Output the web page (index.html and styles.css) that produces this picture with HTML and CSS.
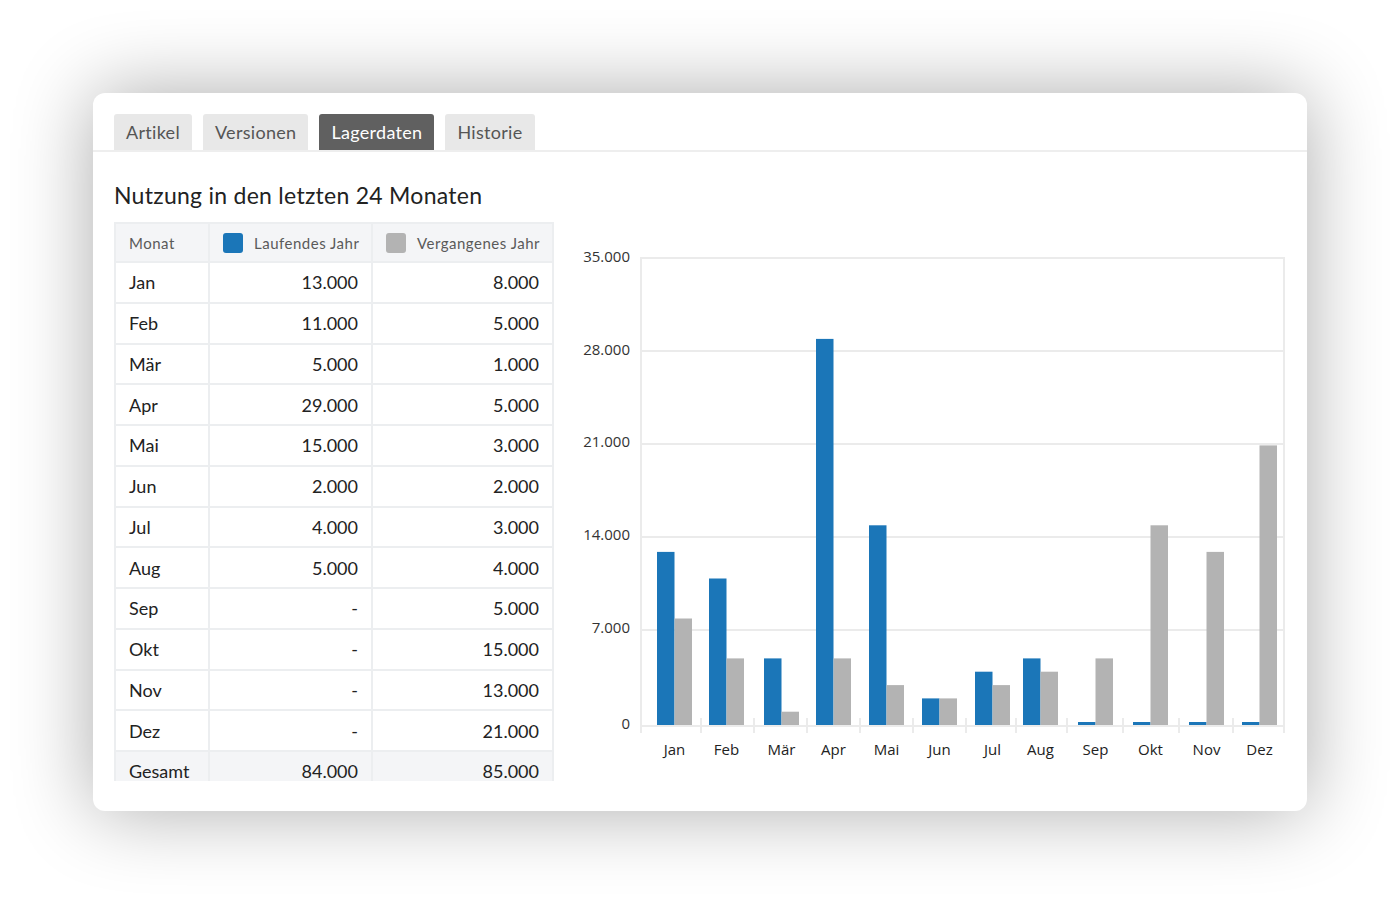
FILE: index.html
```html
<!DOCTYPE html>
<html lang="de">
<head>
<meta charset="utf-8">
<title>Lagerdaten</title>
<link rel="stylesheet" href="styles.css">
</head>
<body>
<div class="card">
  <nav class="tabs">
    <span class="tab">Artikel</span>
    <span class="tab">Versionen</span>
    <span class="tab active">Lagerdaten</span>
    <span class="tab">Historie</span>
  </nav>
  <div class="content">
    <h2 class="title">Nutzung in den letzten 24 Monaten</h2>
    <div class="panel">
      <div class="table-wrap">
        <table class="data">
          <colgroup>
            <col class="c-month">
            <col class="c-num">
            <col class="c-num2">
          </colgroup>
          <thead>
            <tr>
              <th>Monat</th>
              <th class="right"><span class="legend blue"></span>Laufendes Jahr</th>
              <th class="right"><span class="legend gray"></span>Vergangenes Jahr</th>
            </tr>
          </thead>
          <tbody>
            <tr><td>Jan</td><td class="num">13.000</td><td class="num">8.000</td></tr>
            <tr><td>Feb</td><td class="num">11.000</td><td class="num">5.000</td></tr>
            <tr><td>Mär</td><td class="num">5.000</td><td class="num">1.000</td></tr>
            <tr><td>Apr</td><td class="num">29.000</td><td class="num">5.000</td></tr>
            <tr><td>Mai</td><td class="num">15.000</td><td class="num">3.000</td></tr>
            <tr><td>Jun</td><td class="num">2.000</td><td class="num">2.000</td></tr>
            <tr><td>Jul</td><td class="num">4.000</td><td class="num">3.000</td></tr>
            <tr><td>Aug</td><td class="num">5.000</td><td class="num">4.000</td></tr>
            <tr><td>Sep</td><td class="num">-</td><td class="num">5.000</td></tr>
            <tr><td>Okt</td><td class="num">-</td><td class="num">15.000</td></tr>
            <tr><td>Nov</td><td class="num">-</td><td class="num">13.000</td></tr>
            <tr><td>Dez</td><td class="num">-</td><td class="num">21.000</td></tr>
            <tr class="total"><td>Gesamt</td><td class="num">84.000</td><td class="num">85.000</td></tr>
          </tbody>
        </table>
      </div>
      <div class="chart">
        <svg width="740" height="557" viewBox="0 0 740 557" xmlns="http://www.w3.org/2000/svg">
          <g class="grid">
            <line x1="81" y1="36" x2="725" y2="36"/>
            <line x1="81" y1="129" x2="725" y2="129"/>
            <line x1="81" y1="222" x2="725" y2="222"/>
            <line x1="81" y1="315" x2="725" y2="315"/>
            <line x1="81" y1="408" x2="725" y2="408"/>
            <line x1="81" y1="35" x2="81" y2="511"/>
            <line x1="724" y1="35" x2="724" y2="511"/>
          </g>
          <g class="blue-bars">
            <rect x="97" y="329.9" width="17.5" height="173.1"/>
            <rect x="149" y="356.5" width="17.5" height="146.5"/>
            <rect x="204" y="436.4" width="17.5" height="66.6"/>
            <rect x="256" y="116.9" width="17.5" height="386.1"/>
            <rect x="309" y="303.3" width="17.5" height="199.7"/>
            <rect x="362" y="476.4" width="17.5" height="26.6"/>
            <rect x="415" y="449.7" width="17.5" height="53.3"/>
            <rect x="463" y="436.4" width="17.5" height="66.6"/>
            <rect x="518" y="500" width="17.5" height="3"/>
            <rect x="573" y="500" width="17.5" height="3"/>
            <rect x="629" y="500" width="17.5" height="3"/>
            <rect x="682" y="500" width="17.5" height="3"/>
          </g>
          <g class="gray-bars">
            <rect x="114.5" y="396.5" width="17.5" height="106.5"/>
            <rect x="166.5" y="436.4" width="17.5" height="66.6"/>
            <rect x="221.5" y="489.7" width="17.5" height="13.3"/>
            <rect x="273.5" y="436.4" width="17.5" height="66.6"/>
            <rect x="326.5" y="463.1" width="17.5" height="39.9"/>
            <rect x="379.5" y="476.4" width="17.5" height="26.6"/>
            <rect x="432.5" y="463.1" width="17.5" height="39.9"/>
            <rect x="480.5" y="449.7" width="17.5" height="53.3"/>
            <rect x="535.5" y="436.4" width="17.5" height="66.6"/>
            <rect x="590.5" y="303.3" width="17.5" height="199.7"/>
            <rect x="646.5" y="329.9" width="17.5" height="173.1"/>
            <rect x="699.5" y="223.4" width="17.5" height="279.6"/>
          </g>
          <g class="axis">
            <line x1="80" y1="504" x2="725" y2="504"/>
            <line x1="141" y1="496" x2="141" y2="511"/>
            <line x1="194" y1="496" x2="194" y2="511"/>
            <line x1="247" y1="496" x2="247" y2="511"/>
            <line x1="300" y1="496" x2="300" y2="511"/>
            <line x1="353" y1="496" x2="353" y2="511"/>
            <line x1="406" y1="496" x2="406" y2="511"/>
            <line x1="456" y1="496" x2="456" y2="511"/>
            <line x1="507" y1="496" x2="507" y2="511"/>
            <line x1="563" y1="496" x2="563" y2="511"/>
            <line x1="619" y1="496" x2="619" y2="511"/>
            <line x1="673" y1="496" x2="673" y2="511"/>
          </g>
          <g class="ylabels">
            <text x="70" y="40">35.000</text>
            <text x="70" y="133">28.000</text>
            <text x="70" y="225">21.000</text>
            <text x="70" y="318">14.000</text>
            <text x="70" y="411">7.000</text>
            <text x="70" y="507">0</text>
          </g>
          <g class="xlabels">
            <text x="114.5" y="533">Jan</text>
            <text x="166.5" y="533">Feb</text>
            <text x="221.5" y="533">Mär</text>
            <text x="273.5" y="533">Apr</text>
            <text x="326.5" y="533">Mai</text>
            <text x="379.5" y="533">Jun</text>
            <text x="432.5" y="533">Jul</text>
            <text x="480.5" y="533">Aug</text>
            <text x="535.5" y="533">Sep</text>
            <text x="590.5" y="533">Okt</text>
            <text x="646.5" y="533">Nov</text>
            <text x="699.5" y="533">Dez</text>
          </g>
        </svg>
      </div>
    </div>
  </div>
</div>
</body>
</html>
```

FILE: styles.css
```css
* { box-sizing: border-box; }

html, body {
  margin: 0;
  background: #ffffff;
}

body {
  padding: 93px;
  font-family: "Lato", "Noto Sans", sans-serif;
  color: #222;
}

.card {
  width: 1214px;
  height: 718px;
  background: #fff;
  border-radius: 12px;
  box-shadow: 0 0 80px rgba(0, 0, 0, 0.33);
  overflow: hidden;
}

.tabs {
  display: flex;
  gap: 11px;
  padding: 21px 21px 0;
  border-bottom: 2px solid #eeeeee;
}

.tab {
  height: 36px;
  padding: 0 12px;
  display: flex;
  align-items: center;
  background: #e8e8e8;
  color: #555;
  font-size: 18px;
  letter-spacing: 0.3px;
  border-radius: 3px 3px 0 0;
}

.tab.active {
  background: #606060;
  color: #fff;
}

.content {
  padding: 0 21px;
}

.title {
  margin: 28px 0 12px;
  font-size: 23px;
  line-height: 30px;
  font-weight: 400;
  letter-spacing: 0.27px;
  color: #222;
}

.panel {
  display: flex;
  align-items: flex-start;
}

.table-wrap {
  width: 440px;
  height: 559px;
  overflow: hidden;
  flex: none;
}

.data {
  width: 438px;
  table-layout: fixed;
  border-collapse: collapse;
  font-size: 18px;
}

.c-month { width: 94px; }
.c-num { width: 163px; }
.c-num2 { width: 181px; }

.data th,
.data td {
  border: 2px solid #eceef0;
  padding: 0 13px;
  white-space: nowrap;
}

.data th {
  height: 39px;
  background: #f4f5f7;
  font-size: 15px;
  font-weight: 400;
  letter-spacing: 0.5px;
  color: #5a5a5a;
  text-align: left;
}

.data th.right { text-align: right; }

.data td {
  height: 40.75px;
}

.legend {
  display: inline-block;
  width: 20px;
  height: 20px;
  border-radius: 3px;
  vertical-align: -4px;
  margin-right: 11px;
}

.legend.blue { background: #1b76b8; }
.legend.gray { background: #b3b3b3; }

.data td.num { text-align: right; }

.data tr.total td { background: #f4f5f7; }

.chart {
  margin-left: 6px;
  flex: none;
}

.chart svg { display: block; }

.grid line,
.axis line {
  stroke: #ebebeb;
  stroke-width: 2;
}

.blue-bars rect { fill: #1b76b8; }
.gray-bars rect { fill: #b3b3b3; }

.ylabels text {
  font-family: "Open Sans", sans-serif;
  font-size: 15px;
  fill: #333;
  text-anchor: end;
}

.xlabels text {
  font-family: "Open Sans", sans-serif;
  font-size: 15px;
  fill: #222;
  text-anchor: middle;
}
```
